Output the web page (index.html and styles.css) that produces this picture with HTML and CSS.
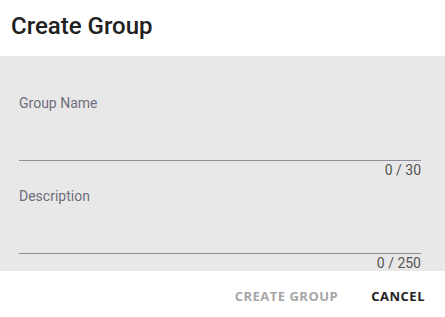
FILE: index.html
```html
<!DOCTYPE html>
<html>
<head>
<meta charset="utf-8">
<link rel="stylesheet" href="styles.css">
</head>
<body>
<div class="dialog">
  <div class="header"><h1 class="title">Create Group</h1></div>
  <div class="content">
    <div class="field">
      <div class="label">Group Name</div>
      <div class="input"></div>
      <div class="counter">0 / 30</div>
    </div>
    <div class="field">
      <div class="label">Description</div>
      <div class="input"></div>
      <div class="counter">0 / 250</div>
    </div>
  </div>
  <div class="actions">
    <span class="btn disabled">CREATE GROUP</span>
    <span class="btn">CANCEL</span>
  </div>
</div>
</body>
</html>
```
FILE: styles.css
```css
html, body { margin: 0; padding: 0; background: #fff; }
.dialog { width: 445px; height: 317px; display: flex; flex-direction: column; overflow: hidden; }
.header { height: 56px; flex: none; padding-left: 11px; box-sizing: border-box; }
.title { margin: 0; padding-top: 11px; font-family: Roboto, sans-serif; font-weight: 500; font-size: 24px; line-height: 30px; color: #212121; }
.content { height: 215px; flex: none; background: #e8e8e8; overflow: hidden; padding: 39px 24px 0 19px; box-sizing: border-box; }
.field { margin-bottom: 10px; }
.label { font-family: Roboto, sans-serif; font-size: 14px; line-height: 16px; color: #6e6e7a; }
.input { height: 49px; border-bottom: 1px solid #8e8e9c; }
.counter { margin-top: 1px; text-align: right; font-family: Roboto, sans-serif; font-size: 14px; line-height: 16px; color: #555; }
.actions { flex: 1; display: flex; justify-content: flex-end; align-items: center; gap: 33px; padding: 4px 20px 0 0; }
.btn { font-family: "Open Sans", sans-serif; font-weight: 700; font-size: 13px; letter-spacing: 0.5px; color: #222; }
.btn.disabled { color: #a6a6a6; }
```
